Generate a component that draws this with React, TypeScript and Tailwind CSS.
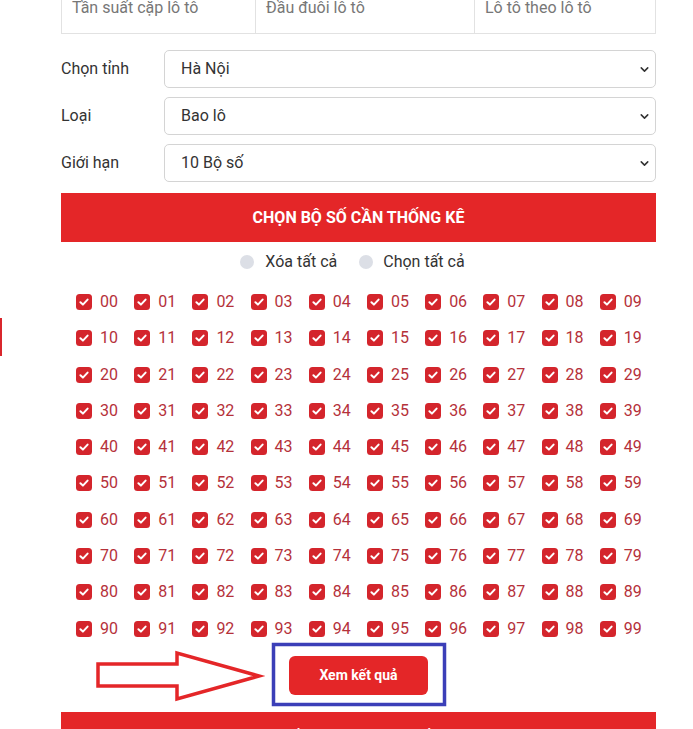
import { ChevronDown } from "lucide-react";

const filters = [
  { label: "Chọn tỉnh", value: "Hà Nội" },
  { label: "Loại", value: "Bao lô" },
  { label: "Giới hạn", value: "10 Bộ số" },
];

const tabs = [
  { name: "Tần suất cặp lô tô", w: "w-[193px]" },
  { name: "Đầu đuôi lô tô", w: "w-[219px]" },
  { name: "Lô tô theo lô tô", w: "flex-1" },
];

const numbers = Array.from({ length: 100 }, (_, i) => String(i).padStart(2, "0"));

function CheckBox() {
  return (
    <svg width="16" height="16" viewBox="0 0 16 16" className="shrink-0">
      <rect x="0" y="0" width="16" height="16" rx="3.5" fill="#d4252c" />
      <path d="M4.4 8.3 L6.9 10.6 L11.6 5.6" fill="none" stroke="#fff" strokeWidth="2" strokeLinecap="round" strokeLinejoin="round" />
    </svg>
  );
}

export default function App() {
  return (
    <div className="relative w-[693px] h-[729px] overflow-hidden bg-white font-['Roboto',sans-serif]">
      {/* sidebar edge peeking in */}
      <div className="absolute left-0 top-[318px] w-[2px] h-[38px] bg-[#d9262c]" />

      <div className="ml-[61px] w-[595px]">
        {/* Tabs row, cut off at the top */}
        <div className="flex -mt-[12px] h-[46px] border border-[#e2e2e2]">
          {tabs.map((t, i) => (
            <div
              key={t.name}
              className={`${t.w} pl-[10px] pt-[8px] text-[16px] leading-[22px] text-[#777] ${i > 0 ? "border-l border-[#e2e2e2]" : ""}`}
            >
              {t.name}
            </div>
          ))}
        </div>

        {/* Filter selects */}
        <div className="mt-[16px] flex flex-col gap-[9px]">
          {filters.map((f) => (
            <div key={f.label} className="flex items-center">
              <div className="w-[103px] text-[16px] text-[#333]">{f.label}</div>
              <div className="flex-1 h-[38px] flex items-center justify-between pl-[16px] pr-[4px] border border-[#d4d4d4] rounded-[5px] text-[16px] text-[#333]">
                <span>{f.value}</span>
                <ChevronDown size={13} strokeWidth={2.8} color="#333" />
              </div>
            </div>
          ))}
        </div>

        {/* Section banner */}
        <div className="mt-[11px] h-[49px] bg-[#e42628] flex items-center justify-center text-white font-bold text-[16px]">
          CHỌN BỘ SỐ CẦN THỐNG KÊ
        </div>

        {/* Select all / clear all */}
        <div className="mt-[9px] pr-[12px] flex justify-center items-center gap-[22px] text-[16px] text-[#333] leading-[22px]">
          <label className="flex items-center gap-[11px]">
            <span className="w-[14px] h-[14px] rounded-full bg-[#dcdfe6]" />
            Xóa tất cả
          </label>
          <label className="flex items-center gap-[10px]">
            <span className="w-[14px] h-[14px] rounded-full bg-[#dcdfe6]" />
            Chọn tất cả
          </label>
        </div>

        {/* Number grid */}
        <div className="mt-[19px] pl-[15px] grid grid-cols-[repeat(10,58.2px)] gap-y-[16.3px]">
          {numbers.map((n) => (
            <div key={n} className="flex items-center gap-[8px] h-[20px]">
              <CheckBox />
              <span className="text-[16px] text-[#b5313a]">{n}</span>
            </div>
          ))}
        </div>

        {/* Submit */}
        <div className="mt-[17px] flex justify-center">
          <button className="w-[139px] h-[39px] rounded-[6px] bg-[#e42628] text-white font-bold text-[14px]">
            Xem kết quả
          </button>
        </div>

        {/* Next banner, cut off at the bottom */}
        <div className="mt-[17px] h-[49px] bg-[#e42628] flex items-start justify-center pt-[15px] text-white font-bold text-[16px]">
          THỐNG KÊ LÔ THEO CẦU
        </div>
      </div>

      {/* Annotation: arrow + highlight box */}
      <svg className="absolute left-0 top-0 pointer-events-none" width="693" height="729">
        <polygon
          points="98,664 177,664 177,653 259,676 177,699 177,686 98,686"
          fill="#fff"
          stroke="#e42628"
          strokeWidth="3.5"
          strokeLinejoin="miter"
        />
        <rect x="273.5" y="644.5" width="171" height="60" fill="none" stroke="#3b3fb8" strokeWidth="3.5" />
      </svg>
    </div>
  );
}
